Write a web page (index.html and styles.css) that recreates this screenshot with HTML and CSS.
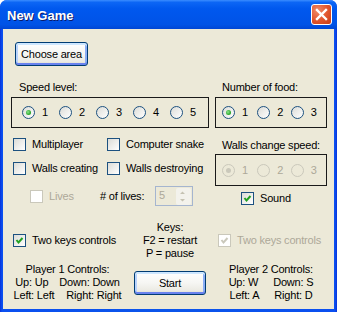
FILE: index.html
```
<!DOCTYPE html>
<html>
<head>
    <title>New Game</title>
    <link rel="stylesheet" href="styles.css">
</head>
<body>
<div class="window">
    <div class="titlebar">
        <span class="title">New Game</span>
        <span class="close">
            <svg width="21" height="21" viewBox="0 0 21 21"><path d="M6 6 L15 15 M15 6 L6 15" stroke="#fff" stroke-width="2.4" stroke-linecap="square"/></svg>
        </span>
    </div>
    <div class="client">
        <button class="btn choose">Choose area</button>

        <div class="row top">
            <div class="group speed">
                <div class="legend">Speed level:</div>
                <div class="box">
                    <label class="radio on"><i></i>1</label>
                    <label class="radio"><i></i>2</label>
                    <label class="radio"><i></i>3</label>
                    <label class="radio"><i></i>4</label>
                    <label class="radio"><i></i>5</label>
                </div>
            </div>
            <div class="group food">
                <div class="legend">Number of food:</div>
                <div class="box">
                    <label class="radio on"><i></i>1</label>
                    <label class="radio"><i></i>2</label>
                    <label class="radio"><i></i>3</label>
                </div>
            </div>
        </div>

        <div class="row mid">
            <div class="options">
                <div class="line">
                    <label class="check c1"><i></i>Multiplayer</label>
                    <label class="check"><i></i>Computer snake</label>
                </div>
                <div class="line">
                    <label class="check c1"><i></i>Walls creating</label>
                    <label class="check"><i></i>Walls destroying</label>
                </div>
                <div class="line lives">
                    <label class="check off c2"><i></i>Lives</label>
                    <span class="lbl">#&nbsp;of lives:</span>
                    <span class="spin">
                        <span class="val">5</span>
                        <span class="arrows">
                            <svg width="13" height="17" viewBox="0 0 13 17"><path d="M4 6 L6.5 3.5 L9 6 Z M4 11 L6.5 13.5 L9 11 Z" fill="#c5c2b2"/></svg>
                        </span>
                    </span>
                </div>
            </div>
            <div class="group walls">
                <div class="legend">Walls change speed:</div>
                <div class="box dis">
                    <label class="radio on"><i></i>1</label>
                    <label class="radio"><i></i>2</label>
                    <label class="radio"><i></i>3</label>
                </div>
                <label class="check on sound"><i><svg width="11" height="11" viewBox="0 0 11 11"><path d="M2.5 5 L4.5 7.5 L8.5 3" fill="none" stroke="#21a121" stroke-width="2"/></svg></i>Sound</label>
            </div>
        </div>

        <div class="row bottom">
            <div class="col p1">
                <label class="check on keys2"><i><svg width="11" height="11" viewBox="0 0 11 11"><path d="M2.5 5 L4.5 7.5 L8.5 3" fill="none" stroke="#21a121" stroke-width="2"/></svg></i>Two keys controls</label>
                <div class="ctrl">
                    <div>Player 1 Controls:</div>
                    <div class="pair w1"><span>Up: Up</span><span>Down: Down</span></div>
                    <div class="pair w2"><span>Left: Left</span><span>Right: Right</span></div>
                </div>
            </div>
            <div class="col mid-col">
                <div>Keys:</div>
                <div>F2 = restart</div>
                <div>P = pause</div>
                <button class="btn start">Start</button>
            </div>
            <div class="col p2">
                <label class="check on off keys2"><i><svg width="11" height="11" viewBox="0 0 11 11"><path d="M2.5 5 L4.5 7.5 L8.5 3" fill="none" stroke="#cac8bb" stroke-width="2"/></svg></i>Two keys controls</label>
                <div class="ctrl">
                    <div>Player 2 Controls:</div>
                    <div class="pair w3"><span>Up: W</span><span>Down: S</span></div>
                    <div class="pair w3"><span>Left: A</span><span>Right: D</span></div>
                </div>
            </div>
        </div>
    </div>
</div>
</body>
</html>
```

FILE: styles.css
```
body {
    margin: 0;
    background: #ffffff;
    font-family: Tahoma, "Liberation Sans", Arial, sans-serif;
    font-size: 11px;
    line-height: 13px;
    letter-spacing: -0.2px;
    color: #000;
}

/* Window frame */
.window {
    width: 337px;
    height: 312px;
    display: flex;
    flex-direction: column;
    background: linear-gradient(90deg, #0831d9, #0a4ff0 2px, #0b55ea 50%, #0a4ff0 calc(100% - 2px), #0831d9);
    border-radius: 7px 7px 0 0;
}

.titlebar {
    height: 29px;
    display: flex;
    align-items: center;
    justify-content: space-between;
    padding: 0 5px 0 7px;
    border-radius: 7px 7px 0 0;
    background: linear-gradient(#3b8dff 0%, #0c66f5 8%, #0058ee 30%, #0055ea 60%, #0053e6 85%, #0046d4 100%);
}

.title {
    color: #fff;
    font-weight: bold;
    font-size: 13px;
    letter-spacing: 0;
    text-shadow: 1px 1px 0 #0a1a6a;
    margin-top: 1px;
}

.close {
    width: 21px;
    height: 21px;
    box-sizing: border-box;
    border: 1px solid #fff;
    border-radius: 3px;
    background: radial-gradient(circle at 30% 30%, #f08a68, #e0542c 55%, #c83c16);
    display: flex;
}
.close svg { margin: -1px; }

.client {
    flex: 1;
    margin: 0 3px 3px 3px;
    background: #ece9d8;
}

/* Buttons */
.btn {
    font: inherit;
    letter-spacing: inherit;
    color: #000;
    border: 1px solid #003c74;
    border-radius: 3px;
    background: linear-gradient(#ffffff, #f6f6f3 50%, #ebeae3 85%, #d8d4c8);
    box-shadow: inset 0 2px 0 #cee7ff, inset 0 -2px 0 #6982ee, inset 2px 0 0 #b9d3fc, inset -2px 0 0 #8baef5;
    padding: 0;
}

.choose {
    display: block;
    width: 73px;
    height: 24px;
    margin: 13px 0 0 12px;
}

.start {
    display: block;
    width: 72px;
    height: 24px;
    margin: 11px auto 0;
}

/* Rows */
.row { display: flex; }

.top {
    padding-left: 8px;
    margin-top: 15px;
}

.legend {
    padding-left: 8px;
    margin-bottom: 3px;
}

.box {
    box-sizing: border-box;
    height: 31px;
    border: 1px solid #1a1a1a;
    display: flex;
    align-items: center;
}

.speed .box { width: 198px; padding-left: 10px; }
.speed .radio { width: 37px; }

.food { margin-left: 6px; }
.food .legend { padding-left: 7px; }
.food .box { width: 112px; padding-left: 6px; }
.food .radio { width: 36px; }
.food .radio:nth-child(2) { width: 34px; }

/* Radio + checkbox */
.radio, .check {
    display: flex;
    align-items: center;
    white-space: nowrap;
}

.radio i {
    width: 13px;
    height: 13px;
    box-sizing: border-box;
    border: 1px solid #1c5180;
    border-radius: 50%;
    background: linear-gradient(135deg, #dcdcd7, #ffffff);
    margin-right: 7px;
    display: flex;
    align-items: center;
    justify-content: center;
}
.radio.on i::after {
    content: "";
    width: 5px;
    height: 5px;
    border-radius: 50%;
    background: radial-gradient(circle at 40% 40%, #8ee58e, #21a121 70%);
}

.check i {
    width: 13px;
    height: 13px;
    box-sizing: border-box;
    border: 1px solid #1c5180;
    background: linear-gradient(135deg, #dcdcd7, #ffffff);
    margin-right: 6px;
    display: flex;
    flex-shrink: 0;
}

.check.off, .dis .radio { color: #aca899; }
.check.off i { border-color: #cac8bb; background: #fff; }
.dis .radio i { border-color: #cac8bb; background: #ece9d8; }
.dis .radio.on i::after { background: #cac8bb; }

/* Options block */
.options {
    width: 202px;
    padding-left: 10px;
    padding-top: 10px;
}

.line {
    display: flex;
    align-items: center;
    height: 13px;
    margin-bottom: 11px;
}
.line .c1 { width: 94px; }

.lives { margin-top: 1px; height: 20px; margin-bottom: 0; }
.lives .c2 { margin-left: 17px; width: 70px; }
.lbl { width: 55px; }

.spin {
    width: 38px;
    height: 20px;
    box-sizing: border-box;
    border: 1px solid #a5b5cf;
    background: #ece9d8;
    display: flex;
    justify-content: space-between;
    color: #aca899;
}
.val { padding: 2px 0 0 3px; }
.arrows {
    width: 15px;
    margin: 1px 1px 0 0;
    height: 17px;
    background: #f3f2ec;
    border-radius: 2px;
}

.walls { padding-top: 11px; }
.walls .legend { padding-left: 7px; margin-bottom: 2px; }
.walls .box { width: 112px; height: 32px; padding-left: 6px; }
.walls .radio { width: 36px; }
.walls .radio:nth-child(2) { width: 34px; }

.sound { margin: 6px 0 0 26px; }

/* Bottom */
.bottom {
    display: grid;
    grid-template-columns: 129px 76px 1fr;
    margin-top: 15px;
}

.mid-col { text-align: center; }

.keys2 { margin: 13px 0 0 10px; }

.ctrl {
    margin-top: 16px;
    text-align: center;
}

.pair {
    display: flex;
    justify-content: center;
}
.w1 span + span { margin-left: 11px; }
.w2 span + span { margin-left: 12px; }
.w3 span + span { margin-left: 15px; }
```
